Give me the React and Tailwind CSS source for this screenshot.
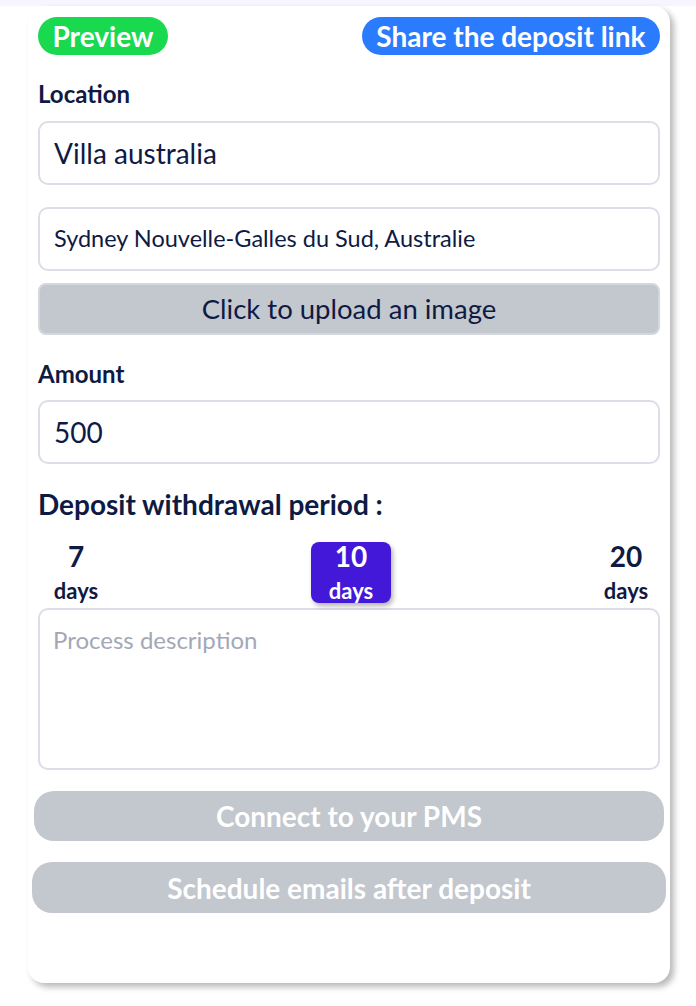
import React, { useState } from 'react';

// Deposit link editor card
const periods = [7, 10, 20];

const App = () => {
  const [period, setPeriod] = useState(10);

  return (
    <div className="min-h-[1006px] w-[696px] bg-white font-['Lato','Noto_Sans',sans-serif] text-[#0f1a44]">
      <div className="h-[6px] bg-[#f7f6fe]" />
      <div className="ml-[28px] w-[642px] h-[977px] rounded-[16px] bg-white px-[10px] pt-[11px] shadow-[4px_4px_6px_rgba(0,0,0,0.28)]">
        {/* Header actions */}
        <div className="flex justify-between items-center">
          <button className="h-[38px] px-[14.5px] rounded-full bg-[#19d94f] text-white text-[28px] font-bold leading-none">
            Preview
          </button>
          <button className="h-[38px] px-[14.5px] rounded-full bg-[#2b7bff] text-white text-[28px] font-bold leading-none">
            Share the deposit link
          </button>
        </div>

        {/* Location */}
        <p className="mt-[24px] text-[24px] font-bold leading-[30px]">Location</p>
        <div className="mt-[12px] h-[64px] flex items-center px-[14px] border-2 border-[#dcdee6] rounded-[10px] text-[28px]">
          Villa australia
        </div>
        <div className="mt-[22px] h-[64px] flex items-center px-[14px] border-2 border-[#dcdee6] rounded-[10px] text-[23.5px]">
          Sydney Nouvelle-Galles du Sud, Australie
        </div>
        <button className="mt-[12px] w-full h-[52px] flex items-center justify-center border-2 border-[#d4d7de] rounded-[8px] bg-[#c3c7ce] text-[27.5px]">
          Click to upload an image
        </button>

        {/* Amount */}
        <p className="mt-[24px] text-[24px] font-bold leading-[30px]">Amount</p>
        <div className="mt-[11px] h-[64px] flex items-center px-[14px] border-2 border-[#dcdee6] rounded-[10px] text-[28px]">
          500
        </div>

        {/* Period */}
        <p className="mt-[23px] text-[28px] font-bold leading-[34px]">Deposit withdrawal period :</p>
        <div className="mt-[21px] flex justify-between px-[14px]">
          {periods.map(p => (
            <button
              key={p}
              onClick={() => setPeriod(p)}
              className={`w-[80px] h-[61px] flex flex-col items-center rounded-[8px] font-bold ${
                p === period ? 'bg-[#4318d9] text-white shadow-[2px_3px_5px_rgba(0,0,0,0.3)]' : 'text-[#0f1a44]'
              } ${p === 7 ? '-ml-[16px]' : ''} ${p === 20 ? '-mr-[20px]' : ''}`}
            >
              <span className="text-[28px] leading-[28px]">{p}</span>
              <span className="mt-[10px] text-[22px] leading-[22px]">days</span>
            </button>
          ))}
        </div>
        <textarea
          placeholder="Process description"
          className="mt-[5px] block w-full h-[162px] px-[13px] py-[16px] border-2 border-[#dcdee6] rounded-[10px] text-[24px] leading-[28px] resize-none outline-none placeholder:text-[#a3a8b7]"
        />

        {/* Disabled actions */}
        <button className="mt-[21px] -mx-[4px] w-[630px] h-[50px] rounded-[20px] bg-[#c3c7ce] text-white text-[28px] font-bold">
          Connect to your PMS
        </button>
        <button className="mt-[21px] -mx-[6px] w-[634px] h-[51px] rounded-[20px] bg-[#c3c7ce] text-white text-[28px] font-bold">
          Schedule emails after deposit
        </button>
      </div>
    </div>
  );
};

export default App;
